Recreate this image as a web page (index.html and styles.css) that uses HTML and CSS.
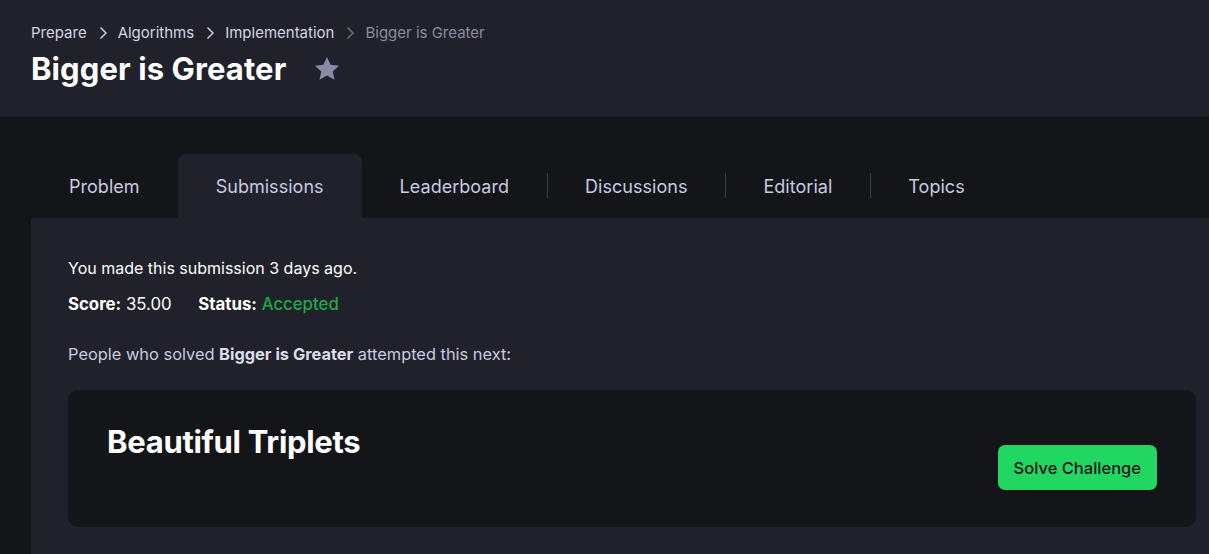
FILE: index.html
```html
<!DOCTYPE html>
<html lang="en">
<head>
<meta charset="utf-8">
<title>Bigger is Greater</title>
<link rel="stylesheet" href="styles.css">
</head>
<body>
<header class="page-header">
  <nav class="crumbs">
    <a class="crumb">Prepare</a>
    <svg class="chev" viewBox="0 0 10 16" width="10" height="16"><path d="M2.5 2.5 L8 8 L2.5 13.5" fill="none" stroke="currentColor" stroke-width="1.5"/></svg>
    <a class="crumb">Algorithms</a>
    <svg class="chev" viewBox="0 0 10 16" width="10" height="16"><path d="M2.5 2.5 L8 8 L2.5 13.5" fill="none" stroke="currentColor" stroke-width="1.5"/></svg>
    <a class="crumb">Implementation</a>
    <svg class="chev dim" viewBox="0 0 10 16" width="10" height="16"><path d="M2.5 2.5 L8 8 L2.5 13.5" fill="none" stroke="currentColor" stroke-width="1.5"/></svg>
    <span class="crumb current">Bigger is Greater</span>
  </nav>
  <div class="title-row">
    <h1 class="title">Bigger is Greater</h1>
    <svg class="star" viewBox="0 0 24 24" width="28" height="28"><path d="M12 1.8 L15.1 8.4 L22.3 9.2 L16.9 14.1 L18.4 21.3 L12 17.6 L5.6 21.3 L7.1 14.1 L1.7 9.2 L8.9 8.4 Z" fill="currentColor"/></svg>
  </div>
</header>
<main class="main">
  <div class="tabs">
    <div class="tab">Problem</div>
    <div class="tab active">Submissions</div>
    <div class="tab">Leaderboard</div>
    <div class="tab sep">Discussions</div>
    <div class="tab sep">Editorial</div>
    <div class="tab sep">Topics</div>
  </div>
  <section class="panel">
    <p class="line">You made this submission 3 days ago.</p>
    <p class="line stats"><b>Score:</b> 35.00 <span class="gap"></span><b>Status:</b> <span class="ok">Accepted</span></p>
    <p class="line next">People who solved <b>Bigger is Greater</b> attempted this next:</p>
    <div class="card">
      <h2 class="card-title">Beautiful Triplets</h2>
      <button class="solve">Solve Challenge</button>
    </div>
  </section>
</main>
</body>
</html>
```
FILE: styles.css
```css
* { box-sizing: border-box; }
html, body { margin: 0; padding: 0; }
body {
  background: #141519;
  font-family: Inter, "Noto Sans", Arial, sans-serif;
  color: #e6e8f0;
  height: 554px;
  overflow: hidden;
}
.page-header {
  background: #20212a;
  height: 117px;
  padding: 23px 31px 0;
}
.crumbs {
  display: flex;
  align-items: center;
  font-size: 15px;
  line-height: 20px;
  color: #d3d6e2;
}
.crumb { color: #d3d6e2; }
.crumb.current { color: #8b8d9c; }
.chev { margin: 0 10px 0 11px; color: #c9ccd8; }
.chev.dim { color: #6b6d7a; }
.title-row {
  display: flex;
  align-items: center;
  margin-top: 6px;
}
.title {
  margin: 0;
  font-size: 31px;
  line-height: 40px;
  font-weight: 700;
  color: #ffffff;
  letter-spacing: 0.1px;
}
.star { margin-left: 27px; color: #8a8ba6; }
.main {
  padding: 37px 0 0 31px;
}
.tabs {
  display: flex;
  align-items: center;
  height: 64px;
}
.tab {
  height: 64px;
  display: flex;
  align-items: center;
  padding: 0 38px;
  font-size: 18px;
  letter-spacing: 0.03px;
  color: #c8cbe0;
  position: relative;
}
.tab.active {
  background: #20212a;
  border-radius: 8px 8px 0 0;
}
.tab.sep::before {
  content: "";
  position: absolute;
  left: 0;
  top: 19px;
  height: 25px;
  width: 1px;
  background: #3a3b46;
}
.panel {
  background: #20212a;
  padding: 40px 13px 40px 37px;
  min-height: 400px;
}
.line {
  margin: 0;
  font-size: 16px;
  line-height: 20px;
  color: #ffffff;
}
.stats { margin-top: 16px; font-size: 16.8px; }
.stats b { font-weight: 700; }
.gap { display: inline-block; width: 22px; }
.ok { color: #1ba94c; font-weight: 500; }
.next { margin-top: 30px; color: #c9cce0; font-size: 16.4px; }
.next b { color: #dcdeeb; }
.card {
  margin-top: 26px;
  background: #141519;
  border-radius: 10px;
  height: 137px;
  padding: 0 39px 37px;
  display: flex;
  justify-content: space-between;
  align-items: flex-end;
}
.card-title {
  align-self: flex-start;
  margin: 32px 0 0;
  font-size: 31px;
  line-height: 40px;
  font-weight: 700;
  color: #ffffff;
  letter-spacing: -0.3px;
}
.solve {
  background: #22d662;
  border: none;
  border-radius: 7px;
  height: 45px;
  padding: 0 16px;
  font-family: Inter, "Noto Sans", sans-serif;
  font-size: 16.5px;
  font-weight: 500;
  color: #14151a;
  letter-spacing: 0;
}
```
